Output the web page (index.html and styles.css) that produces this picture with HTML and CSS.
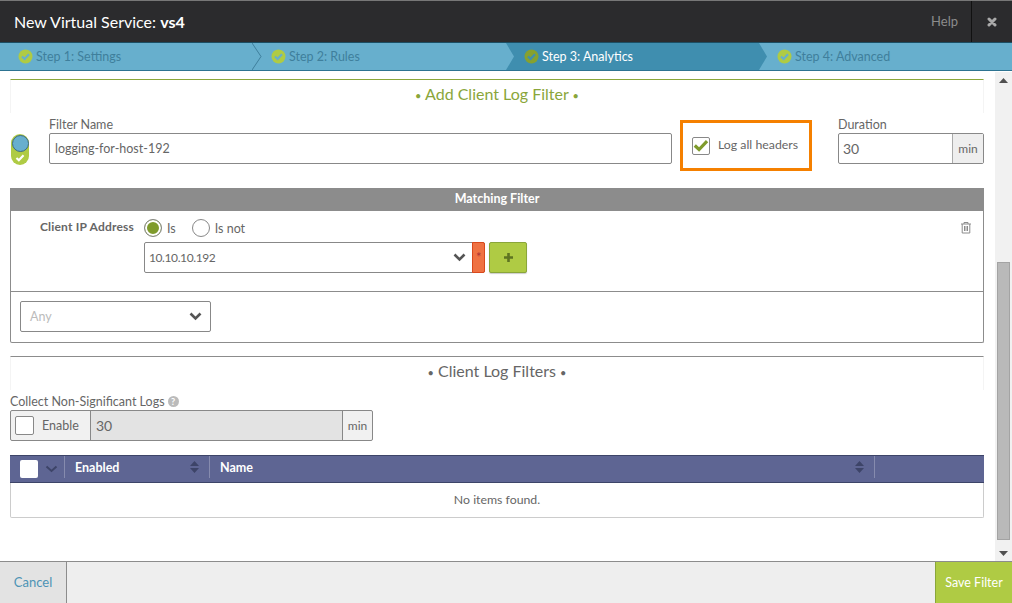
FILE: index.html
```html
<html>
  <head>
    <title>New Virtual Service: vs4</title>
    <link rel="stylesheet" href="styles.css">
  </head>
  <body>
    <div class="modal">
      <div class="top-bar">
        <div class="modal-title">New Virtual Service: <b>vs4</b></div>
        <div class="help">Help</div>
        <div class="close">
          <svg width="10" height="10" viewBox="0 0 10 10"><path d="M2 2 L8 8 M8 2 L2 8" stroke="#a9a9a9" stroke-width="3" stroke-linecap="round"/></svg>
        </div>
      </div>

      <div class="steps">
        <div class="step">
          <svg class="tick" width="15" height="15" viewBox="0 0 15 15"><circle cx="7.5" cy="7.5" r="7" fill="#afcb44"/><path d="M4 7.5 L6.6 10 L11 5.2" fill="none" stroke="#67afcd" stroke-width="2.2"/></svg>
          Step 1: Settings
          <svg class="chevron" width="10" height="27" viewBox="0 0 10 27"><path d="M0 0 L9 13.5 L0 27" fill="none" stroke="#3f7f9c"/></svg>
        </div>
        <div class="step">
          <svg class="tick" width="15" height="15" viewBox="0 0 15 15"><circle cx="7.5" cy="7.5" r="7" fill="#afcb44"/><path d="M4 7.5 L6.6 10 L11 5.2" fill="none" stroke="#67afcd" stroke-width="2.2"/></svg>
          Step 2: Rules
        </div>
        <div class="step step-active">
          <svg class="tick" width="15" height="15" viewBox="0 0 15 15"><circle cx="7.5" cy="7.5" r="7" fill="#86a12f"/><path d="M4 7.5 L6.6 10 L11 5.2" fill="none" stroke="#3f8eaf" stroke-width="2.2"/></svg>
          Step 3: Analytics
        </div>
        <div class="step">
          <svg class="tick" width="15" height="15" viewBox="0 0 15 15"><circle cx="7.5" cy="7.5" r="7" fill="#afcb44"/><path d="M4 7.5 L6.6 10 L11 5.2" fill="none" stroke="#67afcd" stroke-width="2.2"/></svg>
          Step 4: Advanced
        </div>
      </div>

      <div class="body">
        <div class="content">
          <div class="section-head section-head-green">
            <span class="dot">&bull;</span> Add Client Log Filter <span class="dot">&bull;</span>
          </div>

          <div class="filter-row">
            <div class="toggle">
              <span class="toggle-knob"></span>
              <svg width="10" height="8" viewBox="0 0 11 9"><path d="M1.5 4.5 L4.2 7 L9.5 1.5" fill="none" stroke="#fff" stroke-width="2.4"/></svg>
            </div>
            <div class="field field-name">
              <label>Filter Name</label>
              <div class="text-input">logging-for-host-192</div>
            </div>
            <div class="log-headers">
              <span class="checkbox">
                <svg width="18" height="15" viewBox="0 0 18 15"><path d="M2 7.5 L6.8 12 L15.8 2.5" fill="none" stroke="#7f9b2c" stroke-width="3.6"/></svg>
              </span>
              <span class="log-text">Log all headers</span>
            </div>
            <div class="field field-duration">
              <label>Duration</label>
              <div class="input-group">
                <div class="group-value">30</div>
                <div class="group-unit">min</div>
              </div>
            </div>
          </div>

          <div class="match-box">
            <div class="match-head">Matching Filter</div>
            <div class="match-row">
              <div class="match-label">Client IP Address</div>
              <div class="match-fields">
                <div class="radios">
                  <span class="radio radio-on"></span><span class="radio-text">Is</span>
                  <span class="radio"></span><span class="radio-text">Is not</span>
                </div>
                <div class="ip-row">
                  <div class="ip-select">
                    <span class="ip-value">10.10.10.192</span>
                    <svg class="caret" width="13" height="9" viewBox="0 0 13 9"><path d="M1.5 1.5 L6.5 6.5 L11.5 1.5" fill="none" stroke="#555" stroke-width="2.6"/></svg>
                    <span class="required">*</span>
                  </div>
                  <div class="add-btn">
                    <svg width="11" height="11" viewBox="0 0 11 11"><path d="M5.5 1 V10 M1 5.5 H10" stroke="#5e7421" stroke-width="2.6"/></svg>
                  </div>
                </div>
              </div>
              <svg class="trash" width="12" height="13" viewBox="0 0 12 13"><path d="M1 3 H11 M4 3 V1.5 H8 V3 M2.2 3 V12 H9.8 V3 M4.5 5 V10 M6 5 V10 M7.5 5 V10" fill="none" stroke="#8c8c8c"/></svg>
            </div>
            <div class="any-row">
              <div class="any-select">
                <span>Any</span>
                <svg width="13" height="9" viewBox="0 0 13 9"><path d="M1.5 1.5 L6.5 6.5 L11.5 1.5" fill="none" stroke="#555" stroke-width="2.6"/></svg>
              </div>
            </div>
          </div>

          <div class="section-head section-head-grey">
            <span class="dot">&bull;</span> Client Log Filters <span class="dot">&bull;</span>
          </div>

          <div class="collect-label">
            Collect Non-Significant Logs
            <span class="hint">?</span>
          </div>
          <div class="collect-group">
            <div class="collect-enable"><span class="checkbox-empty"></span>Enable</div>
            <div class="collect-value">30</div>
            <div class="collect-unit">min</div>
          </div>

          <div class="grid">
            <div class="grid-head">
              <div class="col-check">
                <span class="head-check"></span>
                <svg width="13" height="8" viewBox="0 0 13 8"><path d="M1.5 1.5 L6.5 6 L11.5 1.5" fill="none" stroke="#3d4468" stroke-width="2"/></svg>
              </div>
              <div class="col col-enabled">Enabled
                <svg class="sort" width="9" height="12" viewBox="0 0 9 12"><path d="M4.5 0 L9 5 H0 Z M0 7 H9 L4.5 12 Z" fill="#3d4468"/></svg>
              </div>
              <div class="col col-name">Name
                <svg class="sort" width="9" height="12" viewBox="0 0 9 12"><path d="M4.5 0 L9 5 H0 Z M0 7 H9 L4.5 12 Z" fill="#3d4468"/></svg>
              </div>
            </div>
            <div class="grid-empty">No items found.</div>
          </div>
        </div>

        <div class="scrollbar">
          <svg class="arrow-up" width="9" height="5" viewBox="0 0 9 5"><path d="M4.5 0 L9 5 H0 Z" fill="#505050"/></svg>
          <div class="thumb"></div>
          <svg class="arrow-down" width="9" height="5" viewBox="0 0 9 5"><path d="M0 0 H9 L4.5 5 Z" fill="#505050"/></svg>
        </div>
      </div>

      <div class="footer">
        <div class="cancel">Cancel</div>
        <div class="save">Save Filter</div>
      </div>
    </div>
  </body>
</html>
```
FILE: styles.css
```css
html, body {
  margin: 0;
  padding: 0;
}

body {
  font-family: Lato, "Open Sans", sans-serif;
  font-size: 12.5px;
  color: #666;
  background-color: #fff;
}

.modal {
  width: 1012px;
  height: 603px;
  display: flex;
  flex-direction: column;
  overflow: hidden;
}

/* Title bar */
.top-bar {
  height: 42px;
  flex: none;
  box-sizing: border-box;
  display: flex;
  align-items: stretch;
  border-top: 1px solid #777;
  background-color: #2b2b2d;
}

.modal-title {
  flex: 1;
  padding-left: 14px;
  line-height: 41px;
  font-size: 16px;
  color: #fff;
}

.help {
  width: 78px;
  padding-right: 13px;
  box-sizing: border-box;
  text-align: right;
  line-height: 41px;
  font-size: 13px;
  color: #8c8c8c;
}

.close {
  width: 41px;
  box-sizing: border-box;
  border-left: 1px solid #111;
  display: flex;
  align-items: center;
  justify-content: center;
}

/* Wizard steps */
.steps {
  height: 29px;
  flex: none;
  display: flex;
  border-top: 1px solid #1c4e63;
  border-bottom: 1px solid #2d7391;
  box-sizing: border-box;
  background-color: #67afcd;
}

.step {
  position: relative;
  width: 253px;
  box-sizing: border-box;
  padding-left: 18px;
  display: flex;
  align-items: center;
  gap: 3px;
  font-size: 12.5px;
  color: #3f7f9c;
}

.step-active {
  color: #fff;
  background-color: #3f8eaf;
  clip-path: polygon(0 0, calc(100% - 8px) 0, 100% 50%, calc(100% - 8px) 100%, 0 100%, 8px 50%);
  width: 261px;
  margin-right: -8px;
}

.chevron {
  position: absolute;
  right: -9px;
  top: 0;
}

.tick {
  flex: none;
}

/* Scrolling body */
.body {
  flex: 1;
  display: flex;
  min-height: 0;
}

.content {
  flex: 1;
  padding: 8px 11px 0 10px;
  min-width: 0;
}

.scrollbar {
  width: 17px;
  flex: none;
  margin-top: 1px;
  background-color: #f1f1f1;
  display: flex;
  flex-direction: column;
  align-items: center;
}

.arrow-up {
  margin-top: 6px;
}

.thumb {
  width: 13px;
  margin-top: auto;
  margin-bottom: 11px;
  height: 278px;
  box-sizing: border-box;
  background-color: #b9b9b9;
  border: 1px solid #a3a3a3;
}

.arrow-down {
  margin-bottom: 5px;
}

/* Section headings */
.section-head {
  height: 34px;
  box-sizing: border-box;
  text-align: center;
  line-height: 28px;
  font-size: 16px;
  border-top: 1px solid #888;
  border-left: 1px solid #f4f4f4;
  border-right: 1px solid #f4f4f4;
}

.section-head-green {
  color: #8aa63a;
  border-top-color: #8aa63a;
}

.section-head-grey {
  margin-top: 13px;
  color: #666;
  border-top-color: #8c8c8c;
}

.dot {
  font-size: 11px;
}

/* Filter name row */
.filter-row {
  height: 71px;
  margin-top: 4px;
  display: flex;
  align-items: flex-start;
}

.toggle {
  flex: none;
  width: 18px;
  height: 31px;
  margin-top: 17px;
  border-radius: 9px;
  background-color: #afcb44;
  display: flex;
  flex-direction: column;
  align-items: center;
  justify-content: space-between;
  padding-bottom: 3px;
  box-sizing: border-box;
  margin-left: 1px;
}

.toggle-knob {
  width: 15px;
  height: 15px;
  margin-top: 1px;
  border-radius: 50%;
  background-color: #67afcd;
  border: 1px solid #3f6b80;
}

.field label {
  display: block;
  height: 15px;
  line-height: 15px;
  color: #666;
}

.field-name {
  width: 623px;
  margin-left: 20px;
}

.text-input {
  height: 31px;
  margin-top: 1px;
  box-sizing: border-box;
  padding-left: 5px;
  line-height: 29px;
  border: 1px solid #888;
  border-radius: 2px;
  color: #666;
}

.log-headers {
  width: 132px;
  height: 51px;
  margin-left: 8px;
  margin-top: 3px;
  box-sizing: border-box;
  border: 3px solid #f58000;
  padding-left: 9px;
  display: flex;
  align-items: center;
  gap: 8px;
  font-size: 12.3px;
  color: #666;
}

.log-text {
  margin-bottom: 2px;
}

.checkbox {
  width: 18px;
  height: 18px;
  box-sizing: border-box;
  border: 1px solid #888;
  border-radius: 2px;
  display: flex;
  align-items: center;
  justify-content: center;
}

.field-duration {
  width: 146px;
  margin-left: 26px;
}

.input-group {
  height: 31px;
  margin-top: 1px;
  box-sizing: border-box;
  border: 1px solid #888;
  border-radius: 2px;
  display: flex;
  line-height: 29px;
}

.group-value {
  flex: 1;
  padding-left: 4px;
  font-size: 14px;
}

.group-unit {
  width: 30px;
  text-align: center;
  background-color: #eee;
  border-left: 1px solid #aaa;
  font-size: 12px;
}

/* Matching filter box */
.match-box {
  height: 155px;
  box-sizing: border-box;
  border: 1px solid #8c8c8c;
  border-top: none;
  border-radius: 2px;
}

.match-head {
  height: 23px;
  margin: 0 -1px;
  line-height: 22px;
  text-align: center;
  font-size: 12.5px;
  font-weight: bold;
  color: #fff;
  background-color: #8c8c8c;
}

.match-row {
  height: 81px;
  position: relative;
  display: flex;
  border-bottom: 1px solid #8c8c8c;
  box-sizing: border-box;
}

.match-label {
  width: 123px;
  padding-top: 8px;
  box-sizing: border-box;
  text-align: right;
  font-size: 12px;
  font-weight: bold;
  letter-spacing: 0.2px;
  color: #666;
  line-height: 16px;
}

.match-fields {
  margin-left: 10px;
}

.radios {
  height: 31px;
  box-sizing: border-box;
  padding-top: 3px;
  display: flex;
  align-items: center;
}

.radio {
  width: 18px;
  height: 18px;
  border: 1px solid #888;
  border-radius: 50%;
  box-sizing: border-box;
  background-color: #fff;
}

.radio-on {
  background-color: #7f9b2c;
  box-shadow: inset 0 0 0 2px #fff;
}

.radio-text {
  margin-left: 5px;
  margin-right: 16px;
}

.ip-row {
  display: flex;
  gap: 4px;
}

.ip-select {
  width: 341px;
  height: 31px;
  box-sizing: border-box;
  border: 1px solid #888;
  border-radius: 2px;
  display: flex;
  align-items: center;
  padding-left: 4px;
  font-size: 12px;
  letter-spacing: -0.4px;
}

.ip-value {
  flex: 1;
}

.caret {
  margin-right: 6px;
}

.required {
  width: 13px;
  height: 31px;
  margin-right: -1px;
  box-sizing: border-box;
  background-color: #ef7243;
  border: 1px solid #d9481c;
  border-radius: 0 2px 2px 0;
  text-align: center;
  line-height: 28px;
  font-size: 13px;
  color: #a33;
}

.add-btn {
  width: 38px;
  height: 31px;
  box-sizing: border-box;
  background-color: #afcb44;
  border: 1px solid #8aa63a;
  border-radius: 2px;
  box-shadow: 0 1px 1px #ccc;
  display: flex;
  align-items: center;
  justify-content: center;
}

.trash {
  position: absolute;
  right: 11px;
  top: 10px;
}

.any-row {
  padding: 9px 0 0 9px;
}

.any-select {
  width: 191px;
  height: 31px;
  box-sizing: border-box;
  border: 1px solid #888;
  border-radius: 2px;
  display: flex;
  align-items: center;
  justify-content: space-between;
  padding: 0 8px 0 9px;
  color: #bbb;
}

/* Non-significant logs */
.collect-label {
  height: 15px;
  margin-top: 4px;
  line-height: 15px;
  color: #666;
  display: flex;
  align-items: center;
  gap: 3px;
}

.hint {
  width: 11px;
  height: 11px;
  border-radius: 50%;
  background-color: #bbb;
  color: #fff;
  font-size: 9px;
  font-weight: bold;
  line-height: 11px;
  text-align: center;
}

.collect-group {
  width: 363px;
  height: 31px;
  margin-top: 1px;
  box-sizing: border-box;
  border: 1px solid #888;
  border-radius: 2px;
  display: flex;
  line-height: 29px;
  background-color: #f1f1f1;
}

.collect-enable {
  width: 79px;
  display: flex;
  align-items: center;
  padding-left: 4px;
  box-sizing: border-box;
  gap: 8px;
}

.checkbox-empty {
  width: 19px;
  height: 19px;
  box-sizing: border-box;
  border: 1px solid #888;
  border-radius: 2px;
  background-color: #fff;
}

.collect-value {
  flex: 1;
  padding-left: 5px;
  background-color: #e3e3e3;
  border-left: 1px solid #888;
  border-right: 1px solid #888;
  font-size: 14px;
}

.collect-unit {
  width: 29px;
  text-align: center;
  font-size: 12px;
}

/* Grid */
.grid {
  margin-top: 14px;
  height: 63px;
  box-sizing: border-box;
  border: 1px solid #ccc;
  border-top: none;
  border-radius: 0 0 2px 2px;
}

.grid-head {
  height: 28px;
  margin: 0 -1px;
  box-sizing: border-box;
  display: flex;
  align-items: center;
  background-color: #5e6593;
  border-top: 1px solid #3d4468;
  border-bottom: 1px solid #3d4468;
  font-size: 12.5px;
  font-weight: bold;
  color: #fff;
}

.col-check {
  width: 54px;
  height: 100%;
  box-sizing: border-box;
  display: flex;
  align-items: center;
  padding-left: 10px;
  gap: 7px;
}

.head-check {
  width: 18px;
  height: 18px;
  border-radius: 2px;
  background-color: #fff;
}

.col {
  position: relative;
  align-self: flex-start;
  height: 22px;
  box-sizing: border-box;
  display: flex;
  align-items: center;
  padding-left: 10px;
  border-left: 1px solid #868bae;
}

.col-enabled {
  width: 145px;
}

.col-name {
  width: 666px;
  border-right: 1px solid #868bae;
}

.sort {
  position: absolute;
  right: 10px;
  top: 5px;
}

.grid-empty {
  height: 34px;
  line-height: 33px;
  text-align: center;
  font-size: 12.3px;
  color: #666;
}

/* Footer */
.footer {
  height: 42px;
  flex: none;
  box-sizing: border-box;
  border-top: 1px solid #8c8c8c;
  display: flex;
  background-color: #eee;
}

.cancel {
  width: 67px;
  box-sizing: border-box;
  border-right: 1px solid #8c8c8c;
  background-color: #e3e3e3;
  text-align: center;
  line-height: 41px;
  font-size: 13px;
  color: #4d93b5;
}

.save {
  width: 77px;
  margin-left: auto;
  box-sizing: border-box;
  border-left: 1px solid #8aa63a;
  background-color: #afcb44;
  text-align: center;
  line-height: 41px;
  color: #fff;
}
```
